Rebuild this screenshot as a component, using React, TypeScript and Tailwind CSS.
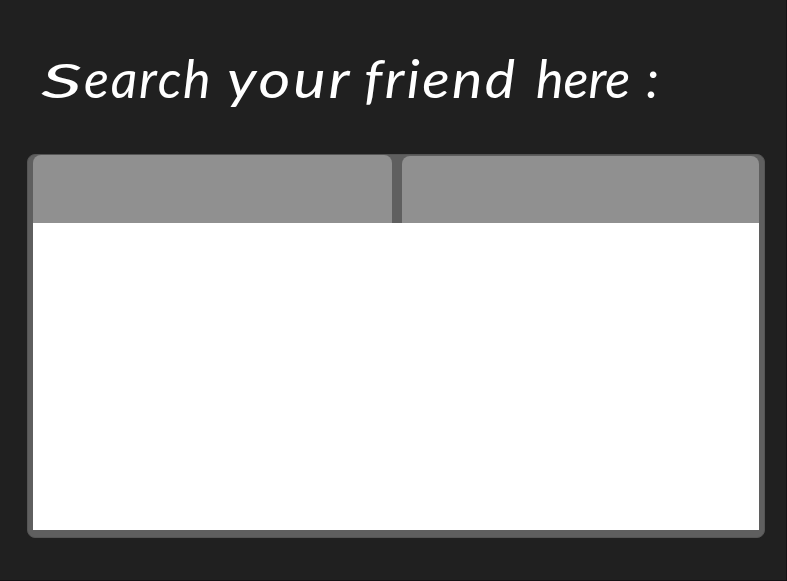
export default function App() {
  return (
    <main className="flex h-[581px] w-[787px] flex-col overflow-hidden border-r border-b border-[#141214] bg-[#202020] pl-[27px]">
      <h1 className="flex h-[154px] shrink-0 pl-[14px] pt-[46px] font-['Lato',sans-serif] text-[52px] font-normal italic leading-[64px] whitespace-nowrap text-white">
        <span className="w-[186px] tracking-[1.8px]">
          <span className="inline-block w-[43px] origin-[0_52px] scale-x-[1.55] scale-y-[0.9] tracking-normal">S</span>
          earch{" "}
        </span>
        <span className="w-[137px] origin-left scale-x-[1.18] tracking-[2.4px]">your </span>
        <span className="w-[172px] origin-left scale-x-[1.1] tracking-[2.2px]">friend </span>
        <span className="w-[110px] tracking-[0px]">here </span>
        <span>:</span>
      </h1>
      <section className="flex h-[384px] w-[738px] flex-col rounded-lg border border-[#555555] bg-[#5f5f5f] px-[5px] pb-[7px]">
        <div className="flex h-[68px] shrink-0 gap-[10px]">
          <div className="w-[359px] rounded-t-lg bg-[#909090]" />
          <div className="mt-px w-[357px] rounded-t-lg bg-[#909090]" />
        </div>
        <div className="grow bg-white" />
      </section>
    </main>
  );
}
